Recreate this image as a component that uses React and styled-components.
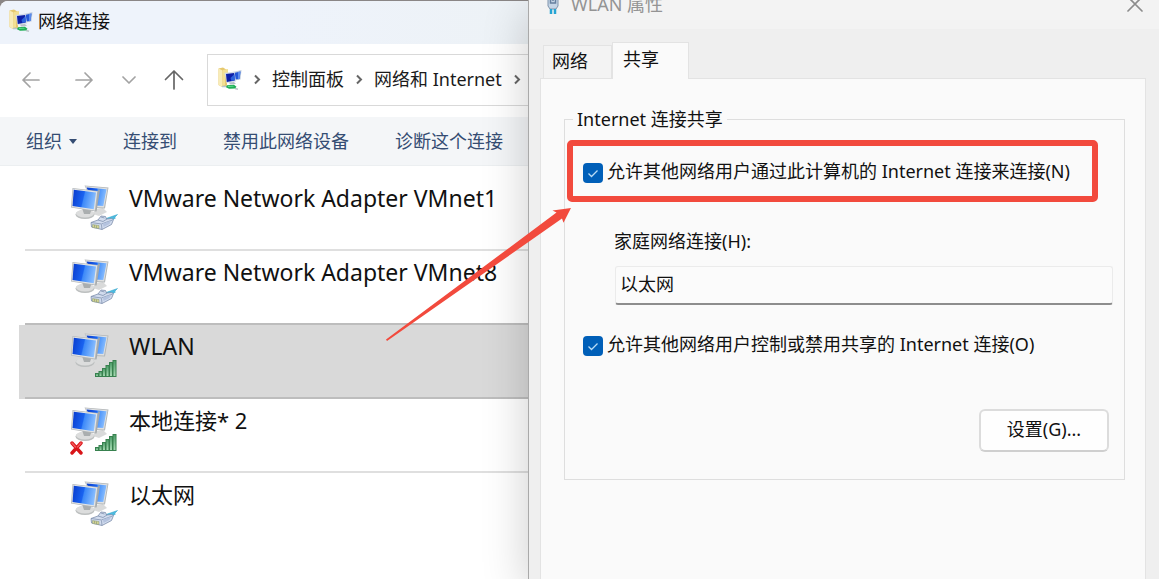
import React from "react";
import styled, { createGlobalStyle } from "styled-components";

const GlobalStyle = createGlobalStyle`
  * { box-sizing: border-box; }
  body {
    margin: 0;
    background: #ffffff;
    color: #111111;
    font-family: "Noto Sans", "Noto Sans CJK SC", sans-serif;
    font-size: 18px;
    line-height: 24px;
  }
  button, input { font: inherit; color: inherit; }
`;

const Desktop = styled.main`
  display: grid;
  grid-template-columns: minmax(0, 528fr) minmax(0, 631fr);
  min-height: 100vh;
  overflow: hidden;
  background: #8a8686;
`;

/* Explorer window */

const Explorer = styled.section`
  display: flex;
  flex-direction: column;
  min-width: 0;
  margin-top: 1px;
  overflow: hidden;
  border-top-left-radius: 8px;
  background: #ffffff;
  white-space: nowrap;
`;

const ExplorerTitle = styled.header`
  display: flex;
  align-items: center;
  gap: 5px;
  height: 43px;
  padding: 0 9px 3px;
  background: linear-gradient(90deg, #eef3fb 50%, #edf2f6);
`;

const Heading = styled.h1`
  margin: 0;
  font-size: 18px;
  font-weight: 400;
`;

const NavBar = styled.nav`
  display: flex;
  align-items: center;
  height: 73px;
  padding: 0 0 2px 11px;
`;

const NavButton = styled.button`
  display: grid;
  place-items: center;
  width: ${(p) => p.$width}px;
  height: 40px;
  padding: 0;
  border: 0;
  background: none;
  color: ${(p) => (p.$strong ? "#666666" : "#a3a3a3")};
`;

const AddressBar = styled.div`
  display: flex;
  flex: 1;
  align-items: center;
  height: 52px;
  padding: 0 0 1px 10px;
  border: 1px solid #d9d9d9;
  border-right: 0;
  overflow: hidden;
`;

const CrumbChevron = styled.svg`
  flex: none;
  width: 30px;
  height: 12px;
  fill: none;
  stroke: #666666;
  stroke-width: 2;
`;

const Crumb = styled.a`
  color: #1b1b1b;
  text-decoration: none;
`;

const CommandBar = styled.div`
  display: flex;
  align-items: center;
  gap: 46px;
  height: 49px;
  padding-left: 26px;
  border-bottom: 1px solid #eceff1;
  background: #f4f6f8;
`;

const Command = styled.button`
  display: flex;
  flex: none;
  align-items: center;
  gap: 7px;
  padding: 0;
  border: 0;
  background: none;
  color: #354d73;
`;

const ConnectionList = styled.ul`
  margin: 0;
  padding: 11px 0 0 19px;
  list-style: none;
`;

const Connection = styled.li`
  height: 74px;
  padding-left: 6px;
  background: ${(p) => (p.$selected ? "#d9d9d9" : "transparent")};
`;

const ConnectionBody = styled.div`
  display: flex;
  gap: 11px;
  height: 74px;
  padding: 8px 0 0 45px;
  border-bottom: 2px solid ${(p) => p.$line};

  svg { flex: none; }
`;

const ConnectionName = styled.span`
  font-size: ${(p) => (p.$latin ? 23 : 22)}px;
  line-height: 26px;
`;

/* Properties dialog */

const Dialog = styled.section`
  position: relative;
  z-index: 1;
  display: flex;
  flex-direction: column;
  min-width: 0;
  border-left: 1px solid #a9a9a9;
  background: #efefef;
  box-shadow: 0 12px 44px rgba(0, 0, 0, 0.2);
`;

const DialogTitle = styled.header`
  display: flex;
  align-items: center;
  gap: 9px;
  height: 48px;
  margin-top: -19px;
  padding: 0 15px 2px;
  background: #f3f3f3;
  color: #949494;
`;

const CloseButton = styled.button`
  display: grid;
  margin-left: auto;
  padding: 0;
  border: 0;
  background: none;
  color: #8c8c8c;
`;

const Tabs = styled.div`
  display: flex;
  align-items: flex-end;
  padding: 13px 14px 0;
`;

const Tab = styled.button`
  position: relative;
  width: ${(p) => (p.$active ? 77 : 69)}px;
  height: ${(p) => (p.$active ? 37 : 33)}px;
  margin-bottom: ${(p) => (p.$active ? -1 : 0)}px;
  padding: 0 0 ${(p) => (p.$active ? 4 : 2)}px ${(p) => (p.$active ? 10 : 8)}px;
  border: 1px solid #e3e3e3;
  border-bottom: 0;
  background: ${(p) => (p.$active ? "#fafafa" : "#f3f3f3")};
  text-align: left;
`;

const TabPanel = styled.div`
  flex: 1;
  margin: 0 13px 0 11px;
  padding: 28px 20px 0 23px;
  border: 1px solid #e3e3e3;
  border-bottom: 0;
  background: #fafafa;
`;

const Group = styled.fieldset`
  display: flex;
  flex-direction: column;
  min-width: 0;
  margin: 0;
  padding: 28px 11px 27px 18px;
  border: 1px solid #dedede;
`;

const GroupLegend = styled.legend`
  margin-left: -10px;
  padding: 0 4px;
`;

const CheckRow = styled.div`
  position: relative;
  display: flex;
  align-items: center;
  gap: 4px;
  height: 24px;
  white-space: nowrap;
`;

const CheckMark = styled.span`
  display: grid;
  flex: none;
  margin-top: 4px;

  input, svg { grid-area: 1 / 1; }
  input {
    appearance: none;
    width: 20px;
    height: 20px;
    margin: 0;
    border-radius: 4px;
    background: #005fb8;
  }
  svg { pointer-events: none; }
`;

const FieldLabel = styled.label`
  margin: 46px 0 13px 31px;
`;

const Field = styled.input`
  height: 39px;
  margin: 0 0 27px 32px;
  padding: 0 4px 5px;
  border: 1px solid #ebebeb;
  border-bottom: 2px solid #8d8d8d;
  border-radius: 3px;
  outline: 0;
  background: #fbfbfb;
`;

const SettingsButton = styled.button`
  align-self: flex-end;
  width: 130px;
  height: 43px;
  margin: 53px 4px 0 0;
  padding: 0 0 3px;
  border: 2px solid #dcdcdc;
  border-bottom-color: #cfcfcf;
  border-radius: 6px;
  background: #fefefe;
`;

const Highlight = styled.span`
  position: absolute;
  inset: -19px 15px -19px -16px;
  border: 6px solid #f24a3d;
  border-radius: 5px;
  pointer-events: none;
`;

const Pointer = styled.svg`
  position: absolute;
  top: 41px;
  left: -203px;
  fill: #f24a3d;
  pointer-events: none;
`;

const FolderIcon = styled.svg`
  flex: none;
  width: 24px;
  height: 24px;
`;

function FolderNetworkIcon() {
  return (
    <FolderIcon viewBox="0 0 24 24" aria-hidden="true">
      <path d="M0.500 1.500L5 .5l4 2.500v16l-5 1-3.500-2z" fill="#e6c86e" />
      <path d="M0.500 1.500L4.500 3.500v16.500l-4-2z" fill="#f8ecb8" />
      <path d="M5 3l5-1v4l-3 3v9l-2.500 1z" fill="#f3e093" />
      <path d="M15 5l8.500-2-1 9.500-6 1z" fill="#c3cfdf" />
      <path d="M16 6l6.500-1.500-1 7.500-5 .5z" fill="#2457d8" />
      <path d="M20 5l2.500-.5-1 7.500-1.500.2z" fill="#5b8cec" />
      <path d="M6.500 6l10-1.500 1.500 10-9.500 1.500z" fill="#d3dbe8" />
      <path d="M8 7l8-1 .8 7.500-8 1.500z" fill="#0d1fa8" />
      <path d="M12.500 11l4-4 .5 6-3.500 1z" fill="#2b63dc" />
      <path d="M11 15.500l5-.5 2 2-6 .5z" fill="#b9c0c8" />
      <path d="M4 19.500h6M17 21.500l3 .7" stroke="#bcc5c7" strokeWidth="1.500" />
      <path d="M9 18.300l7-.6 2.500 2-1.500 1.800-6 .3-3-1.500z" fill="#1fae55" />
      <path d="M10 19l5-.3 1 .7-6 .6z" fill="#66dc92" />
    </FolderIcon>
  );
}

function ConnectionIcon({ kind, disconnected, id }) {
  const screen = `url(#screen-${id})`;
  return (
    <svg width="48" height="48" viewBox="0 0 48 48" aria-hidden="true">
      <defs>
        <linearGradient id={`screen-${id}`} x1="0" y1="0.300" x2="1" y2="0.500">
          <stop offset="0" stopColor="#0a3fd0" />
          <stop offset="0.450" stopColor="#1a63f0" />
          <stop offset="0.500" stopColor="#3d89f8" />
          <stop offset="1" stopColor="#8fc2ff" />
        </linearGradient>
        <linearGradient id={`bar-${id}`} x1="0" y1="0" x2="0" y2="1">
          <stop offset="0" stopColor="#4b9d68" />
          <stop offset="1" stopColor="#a9dcb5" />
        </linearGradient>
      </defs>
      <path d="M26 24l7-1 4 4-8 4-6-2z" fill="#d9dada" />
      <path d="M14.500.5L38.500 2.500 35 23.500 25 23z" fill="#b4b8ba" />
      <path d="M15.300 1.300L37.500 3.200 34 22.500 25 22z" fill="#e0e1e1" />
      <path d="M16.500 2.500L36.500 4.200 33.300 21 25 20.500z" fill={screen} />
      <ellipse cx="15" cy="29.500" rx="9.500" ry="4.500" fill="#bcbfbf" />
      <ellipse cx="15" cy="28.500" rx="9" ry="4" fill="#dcdddd" />
      <path d="M12 23h10l-2 6h-6z" fill="#aaaeaf" />
      <path d="M24 26l4.500-22L30 5l-3.500 21.500z" fill="#a5a9ab" />
      <path d="M2.500 3L28 6 25.500 26.500 1 22.500z" fill="#b4b8ba" />
      <path d="M3.200 3.700L27.200 6.600 24.800 25.600 1.800 21.900z" fill="#e4e5e5" />
      <path d="M3.800 4.700L26 7.400 23.800 24.300 2.500 20.900z" fill={screen} />
      {kind === "wired" ? (
        <g strokeLinejoin="round">
          <path d="M36 33.500l11.500-4-3 3 1 .5-6 3.500z" fill="#4dbbe0" stroke="#269fc7" strokeWidth="0.500" />
          <path d="M21 37.500l7-2.500 3-4 4.500.5 1 2.500 5-.5 2 1-2 5-9.500 5-10.500-2.500z" fill="#d2dcee" stroke="#7c8dab" strokeWidth="0.800" />
          <path d="M21 37.500l10.500 1.500 11-4M31.500 39.500l.5 5M28 35l5 1.500 4-2.500M31 32l3.500 1" fill="none" stroke="#8293b0" strokeWidth="0.800" />
          <path d="M33 38.500l8-3-1.500 3.500-6 3z" fill="#b4c3df" />
          <path d="M22.500 39.500l6.500 1v3l-6.500-1z" fill="#d4d592" stroke="#85947b" strokeWidth="0.500" />
          <path d="M24.500 40v2.500M26.500 40.500v2.500" stroke="#85947b" strokeWidth="0.600" />
        </g>
      ) : (
        <g fill={`url(#bar-${id})`} stroke="#38814f">
          {[3, 5, 8, 11, 14, 16].map((height, index) => (
            <rect key={height} x={25.500 + index * 3.5} y={43.500 - height} width="3" height={height} />
          ))}
        </g>
      )}
      {disconnected && (
        <g fill="none" strokeLinecap="round">
          <path d="M2 36l9 10M11 36l-9 10" stroke="#d81418" strokeWidth="3.400" />
          <path d="M2 36l3.500 4M11 36l-3.500 4" stroke="#f4575a" strokeWidth="1.600" />
        </g>
      )}
    </svg>
  );
}

function Arrow({ d, width, height }) {
  return (
    <svg width={width} height={height} viewBox={`0 0 ${width} ${height}`} fill="none" stroke="currentColor" strokeWidth="1.700" strokeLinecap="round" strokeLinejoin="round" aria-hidden="true">
      <path d={d} />
    </svg>
  );
}

function Chevron() {
  return (
    <CrumbChevron viewBox="0 0 30 12" aria-hidden="true">
      <path d="M13 2.500l4 4-4 4" />
    </CrumbChevron>
  );
}

function CheckOption({ id, children, highlighted }) {
  return (
    <CheckRow>
      <CheckMark>
        <input id={id} type="checkbox" defaultChecked />
        <svg width="20" height="20" viewBox="0 0 20 20" fill="none" stroke="#b9dcf5" strokeWidth="1.300" aria-hidden="true">
          <path d="M5.500 10.500l3 3 6-6" />
        </svg>
      </CheckMark>
      <label htmlFor={id}>{children}</label>
      {highlighted && (
        <>
          <Highlight />
          <Pointer width="192" height="144" viewBox="0 0 192 144" aria-hidden="true">
            <path d="M6 139.500L176.500 12.500 172.500 10.500 191 8 183.500 22.800 182 18.500 7 141z" />
          </Pointer>
        </>
      )}
    </CheckRow>
  );
}

const connections = [
  { name: "VMware Network Adapter VMnet1", kind: "wired", line: "#dfdfdf", latin: true },
  { name: "VMware Network Adapter VMnet8", kind: "wired", line: "#bdbdbd", latin: true },
  { name: "WLAN", kind: "wireless", line: "#bdbdbd", latin: true, selected: true },
  { name: "本地连接* 2", kind: "wireless", line: "#dfdfdf", disconnected: true },
  { name: "以太网", kind: "wired", line: "transparent" },
];

export default function App() {
  return (
    <>
      <GlobalStyle />
      <Desktop>
        <Explorer>
          <ExplorerTitle>
            <FolderNetworkIcon />
            <Heading>网络连接</Heading>
          </ExplorerTitle>
          <NavBar>
            <NavButton $width={40} aria-label="后退">
              <Arrow width={20} height={18} d="M18 9H2M9 2L2 9l7 7" />
            </NavButton>
            <NavButton $width={66} aria-label="前进">
              <Arrow width={20} height={18} d="M2 9h16M11 2l7 7-7 7" />
            </NavButton>
            <NavButton $width={24} aria-label="最近位置">
              <Arrow width={14} height={10} d="M1 2l6 6 6-6" />
            </NavButton>
            <NavButton $width={66} $strong aria-label="向上">
              <Arrow width={20} height={22} d="M10 20V2M1.500 10.500L10 2l8.500 8.500" />
            </NavButton>
            <AddressBar>
              <FolderNetworkIcon />
              <Chevron />
              <Crumb href="#panel">控制面板</Crumb>
              <Chevron />
              <Crumb href="#network">网络和 Internet</Crumb>
              <Chevron />
            </AddressBar>
          </NavBar>
          <CommandBar>
            <Command>
              组织
              <svg width="8" height="5" viewBox="0 0 8 5" fill="currentColor" aria-hidden="true">
                <path d="M0 0h8L4 5z" />
              </svg>
            </Command>
            <Command>连接到</Command>
            <Command>禁用此网络设备</Command>
            <Command>诊断这个连接</Command>
          </CommandBar>
          <ConnectionList>
            {connections.map((item, index) => (
              <Connection key={item.name} $selected={item.selected}>
                <ConnectionBody $line={item.line}>
                  <ConnectionIcon id={index} kind={item.kind} disconnected={item.disconnected} />
                  <ConnectionName $latin={item.latin}>{item.name}</ConnectionName>
                </ConnectionBody>
              </Connection>
            ))}
          </ConnectionList>
        </Explorer>

        <Dialog>
          <DialogTitle>
            <svg width="18" height="24" viewBox="0 0 18 24" aria-hidden="true">
              <path d="M4 1h10v13l-2 3H6l-2-3z" fill="#c5d5e6" stroke="#7e93ac" />
              <path d="M6.500 5v6h5V5M9 5v4" fill="none" stroke="#667f9e" strokeWidth="1.500" />
              <path d="M7 17v5M11 17v5" stroke="#25a5d4" strokeWidth="2.500" />
            </svg>
            WLAN 属性
            <CloseButton aria-label="关闭">
              <Arrow width={18} height={18} d="M2 2l14 14M16 2L2 16" />
            </CloseButton>
          </DialogTitle>
          <Tabs role="tablist">
            <Tab role="tab" aria-selected="false">网络</Tab>
            <Tab role="tab" aria-selected="true" $active>共享</Tab>
          </Tabs>
          <TabPanel role="tabpanel">
            <Group>
              <GroupLegend>Internet 连接共享</GroupLegend>
              <CheckOption id="share" highlighted>
                允许其他网络用户通过此计算机的 Internet 连接来连接(N)
              </CheckOption>
              <FieldLabel htmlFor="home">家庭网络连接(H):</FieldLabel>
              <Field id="home" type="text" defaultValue="以太网" readOnly />
              <CheckOption id="control">
                允许其他网络用户控制或禁用共享的 Internet 连接(O)
              </CheckOption>
              <SettingsButton>设置(G)...</SettingsButton>
            </Group>
          </TabPanel>
        </Dialog>
      </Desktop>
    </>
  );
}
